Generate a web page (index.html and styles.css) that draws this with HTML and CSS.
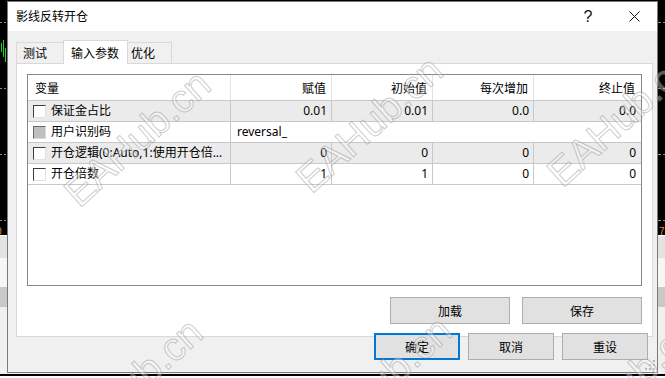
FILE: index.html
```html
<!DOCTYPE html>
<html lang="zh-CN">
<head>
<meta charset="utf-8">
<title>影线反转开仓</title>
<link rel="stylesheet" href="styles.css">
</head>
<body>
<div class="desk">
  <div class="chart">
    <svg width="665" height="235" viewBox="0 0 665 235">
      <g stroke="#8a8a8a" stroke-width="1">
        <path d="M0 22.5H2M4 22.5H6M0 88.5H2M4 88.5H6M0 154.5H2M4 154.5H6M0 220.5H2M4 220.5H6"/>
        <path d="M658 22.5H661M663 22.5H665M658 88.5H661M663 88.5H665M658 154.5H661M663 154.5H665M658 220.5H661M663 220.5H665"/>
      </g>
      <g stroke="#1fd11f" stroke-width="1">
        <path d="M1.5 43V52M3.5 40V57M5.5 48V62"/>
      </g>
      <text x="-4" y="235" fill="#e0902a" font-size="10" font-family="Liberation Sans">0</text>
      <text x="659" y="235" fill="#e0902a" font-size="10" font-family="Liberation Sans">7</text>
    </svg>
  </div>
  <div class="band band-a"></div>
  <div class="band band-b"></div>
  <div class="band band-c"></div>
  <div class="band band-d"></div>
  <div class="band band-e"></div>
  <div class="band band-f"></div>
  <div class="band band-g"></div>
</div>

<div class="dialog">
  <div class="titlebar">
    <span class="title">影线反转开仓</span>
    <span class="tb-btn help">?</span>
    <span class="tb-btn close">
      <svg width="11" height="11" viewBox="0 0 11 11"><path d="M0.5 0.5L10.5 10.5M10.5 0.5L0.5 10.5" stroke="#111" stroke-width="1" fill="none"/></svg>
    </span>
  </div>
  <div class="dbody">
    <div class="tabs">
      <div class="tab t1">测试</div>
      <div class="tab t2 active">输入参数</div>
      <div class="tab t3">优化</div>
    </div>
    <div class="panel">
      <div class="list">
        <div class="row head">
          <div class="c c1">变量</div>
          <div class="c r">赋值</div>
          <div class="c r">初始值</div>
          <div class="c r">每次增加</div>
          <div class="c r last">终止值</div>
        </div>
        <div class="row odd">
          <div class="c c1"><span class="cb"></span><span class="name">保证金占比</span></div>
          <div class="c r">0.01</div>
          <div class="c r">0.01</div>
          <div class="c r">0.0</div>
          <div class="c r last">0.0</div>
        </div>
        <div class="row">
          <div class="c c1"><span class="cb dis"></span><span class="name">用户识别码</span></div>
          <div class="c span">reversal_</div>
        </div>
        <div class="row odd">
          <div class="c c1"><span class="cb"></span><span class="name">开仓逻辑(0:Auto,1:使用开仓倍...</span></div>
          <div class="c r">0</div>
          <div class="c r">0</div>
          <div class="c r">0</div>
          <div class="c r last">0</div>
        </div>
        <div class="row">
          <div class="c c1"><span class="cb"></span><span class="name">开仓倍数</span></div>
          <div class="c r">1</div>
          <div class="c r">1</div>
          <div class="c r">0</div>
          <div class="c r last">0</div>
        </div>
      </div>
      <div class="btnrow">
        <button class="btn wide">加载</button>
        <button class="btn wide">保存</button>
      </div>
    </div>
    <div class="btnrow2">
      <button class="btn ok">确定</button>
      <button class="btn">取消</button>
      <button class="btn">重设</button>
    </div>
  </div>
  <svg class="grip" width="12" height="12" viewBox="0 0 12 12">
    <g fill="#b4b4b4">
      <rect x="9" y="1" width="2" height="2"/>
      <rect x="9" y="5" width="2" height="2"/>
      <rect x="5" y="5" width="2" height="2"/>
      <rect x="9" y="9" width="2" height="2"/>
      <rect x="5" y="9" width="2" height="2"/>
      <rect x="1" y="9" width="2" height="2"/>
    </g>
  </svg>
</div>

<span class="wm wm1">EAHub.cn</span>
<span class="wm wm2">EAHub.cn</span>
<span class="wm wm3">EAHub.cn</span>
<span class="wm wm4">EAHub.cn</span>
<span class="wm wm5">EAHub.cn</span>
<span class="wm wm6">EAHub.cn</span>
</body>
</html>
```

FILE: styles.css
```css
* { box-sizing: border-box; }
html, body { margin: 0; padding: 0; }
body {
  width: 665px;
  height: 378px;
  overflow: hidden;
  position: relative;
  font-family: "Noto Sans", "Noto Sans CJK SC", sans-serif;
  font-size: 12px;
  color: #000;
  background: #f0f0f0;
}

/* desktop behind the dialog */
.desk { height: 378px; display: flex; flex-direction: column; }
.chart { height: 235px; background: #000; }
.chart svg { display: block; }
.band-a { height: 1px; background: #ffffff; }
.band-b { height: 22px; background: #e3e3e3; }
.band-c { height: 29px; background: #f6f6f6; }
.band-d { height: 20px; background: #c9c9c9; }
.band-e { flex: 1; background: #f0f0f0; }
.band-f { height: 2px; background: #000; }
.band-g { height: 2px; background: #fff; }

/* dialog window */
.dialog {
  position: absolute;
  left: 7px;
  top: 1px;
  width: 651px;
  height: 372px;
  border: 1px solid #7a7a7a;
  background: #f0f0f0;
  display: flex;
  flex-direction: column;
}
.titlebar {
  height: 29px;
  background: #fff;
  display: flex;
  align-items: center;
}
.title { flex: 1; padding-left: 8px; line-height: 29px; }
.tb-btn {
  width: 46px;
  height: 29px;
  display: flex;
  align-items: center;
  justify-content: center;
}
.help { font-family: "Liberation Sans", sans-serif; font-size: 16px; color: #111; }
.close svg { display: block; }

.dbody {
  flex: 1;
  padding: 9px 4px 0 8px;
  display: flex;
  flex-direction: column;
}

/* tabs */
.tabs {
  display: flex;
  align-items: flex-end;
  height: 23px;
  position: relative;
  z-index: 1;
}
.tab {
  height: 21px;
  border: 1px solid #d9d9d9;
  border-bottom: none;
  background: #f0f0f0;
  line-height: 19px;
  padding-top: 1px;
  white-space: nowrap;
}
.t1 { width: 47px; padding-left: 6px; border-right: none; }
.t2 { width: 65px; padding-left: 7px; }
.t3 { width: 44px; padding-left: 3px; border-left: none; }
.tab.active {
  height: 24px;
  margin-bottom: -1px;
  background: #fff;
  line-height: 20px;
  padding-top: 3px;
}

/* tab panel */
.panel {
  height: 274px;
  border: 1px solid #d9d9d9;
  background: #fff;
  padding: 10px 10px 12px 10px;
  display: flex;
  flex-direction: column;
}
.list {
  height: 212px;
  border: 1px solid #828790;
  background: #fff;
}
.row {
  display: grid;
  grid-template-columns: 203px 101px 101px 101px 106px;
  height: 21px;
  border-bottom: 1px solid #c8c8c8;
}
.row.odd { background: #ebebeb; }
.row.head { height: 26px; background: #fff; }
.c {
  border-right: 1px solid #c8c8c8;
  display: flex;
  align-items: center;
  white-space: nowrap;
  overflow: hidden;
  line-height: 20px;
}
.c.last { border-right: none; }
.c.r { justify-content: flex-end; padding-right: 4px; }
.c.span { grid-column: 2 / -1; border-right: none; padding-left: 6px; }
.head .c { border-right-color: #e5e5e5; padding-top: 2px; }
.head .c.r { padding-right: 5px; }
.head .c1 { padding-left: 7px; }
.c1 { padding-left: 5px; }
.name { padding-left: 5px; overflow: hidden; text-overflow: ellipsis; }

.cb {
  flex: none;
  width: 13px;
  height: 13px;
  margin-top: 1px;
  border: 1px solid;
  border-color: #3c3c3c #e2e2e2 #e2e2e2 #3c3c3c;
  background: #fff;
}
.cb.dis { background: #bfbfbf; border-color: #6a6a6a #dadada #dadada #6a6a6a; }

/* buttons */
.btnrow {
  margin-top: 11px;
  display: flex;
  justify-content: flex-end;
  gap: 12px;
}
.btn {
  font: inherit;
  color: #000;
  height: 27px;
  width: 86px;
  padding: 0;
  background: #e1e1e1;
  border: 1px solid #adadad;
  border-radius: 0;
  display: flex;
  align-items: center;
  justify-content: center;
}
.btn.wide { width: 120px; }
.btn.ok { border: 2px solid #0078d7; }
.btnrow2 {
  margin-top: -4px;
  display: flex;
  justify-content: flex-end;
  gap: 8px;
  padding-right: 5px;
  position: relative;
  z-index: 1;
}

.grip { position: absolute; right: 1px; bottom: 1px; }

/* watermark overlay */
.wm {
  position: absolute;
  transform: translate(-50%, -50%) rotate(-42deg);
  font-family: "Liberation Sans", sans-serif;
  font-size: 40px;
  line-height: 1;
  color: rgba(255, 255, 255, 0.35);
  -webkit-text-stroke: 1px rgba(130, 130, 130, 0.42);
  white-space: nowrap;
  pointer-events: none;
  z-index: 10;
}
.wm1 { left: 137px; top: 138px; }
.wm2 { left: 369px; top: 124px; }
.wm3 { left: 620px; top: 118px; }
.wm4 { left: 129px; top: 386px; }
.wm5 { left: 378px; top: 384px; }
.wm6 { left: 625px; top: 385px; }
```
